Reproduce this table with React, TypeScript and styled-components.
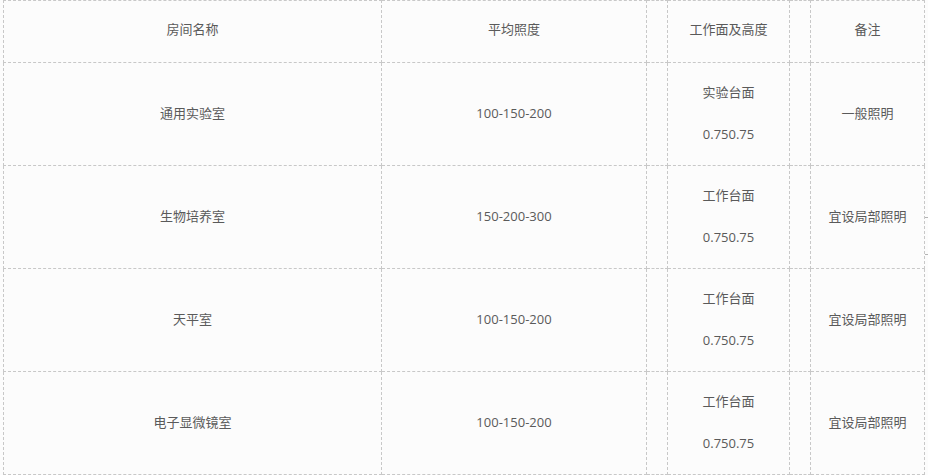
import React from "react";
import styled, { createGlobalStyle } from "styled-components";

const GlobalStyle = createGlobalStyle`
  html, body {
    margin: 0;
    padding: 0;
    background: #fcfcfc;
  }
  body {
    font-family: "Open Sans", "Noto Sans CJK SC", sans-serif;
    font-size: 13px;
    color: #5a5a5a;
  }
`;

const Page = styled.div`
  position: relative;
  padding: 0 0 0 3px;
  width: 925px;
  height: 475px;
  box-sizing: border-box;
`;

const Table = styled.table`
  border-collapse: collapse;
  table-layout: fixed;
  width: 921px;
  background: #fcfcfc;
`;

const Cell = styled.td<{ $head?: boolean }>`
  border: 1px dashed #c8c8c8;
  text-align: center;
  vertical-align: middle;
  padding: 0 0 ${(p) => (p.$head ? 6 : 2)}px 0;
  height: ${(p) => (p.$head ? 55 : 100)}px;
  line-height: 20px;
  color: #5a5a5a;
  font-weight: normal;
`;

const Stack = styled.div`
  display: flex;
  flex-direction: column;
  align-items: center;
  gap: 22px;
  padding-bottom: 1px;
`;

const Line = styled.span`
  display: block;
  line-height: 20px;
`;

const Marker = styled.div`
  position: absolute;
  left: 925px;
  top: 217px;
  width: 3px;
  height: 36px;
  border-top: 1px solid #b5b5b5;
  border-bottom: 1px solid #b5b5b5;
`;

type Row = {
  name: string;
  lux: string;
  surface: string;
  height: string;
  note: string;
};

const rows: Row[] = [
  { name: "通用实验室", lux: "100-150-200", surface: "实验台面", height: "0.750.75", note: "一般照明" },
  { name: "生物培养室", lux: "150-200-300", surface: "工作台面", height: "0.750.75", note: "宜设局部照明" },
  { name: "天平室", lux: "100-150-200", surface: "工作台面", height: "0.750.75", note: "宜设局部照明" },
  { name: "电子显微镜室", lux: "100-150-200", surface: "工作台面", height: "0.750.75", note: "宜设局部照明" },
];

export default function App() {
  return (
    <>
      <GlobalStyle />
      <Page>
        <Table>
          <colgroup>
            <col style={{ width: 378 }} />
            <col style={{ width: 265 }} />
            <col style={{ width: 21 }} />
            <col style={{ width: 122 }} />
            <col style={{ width: 21 }} />
            <col style={{ width: 114 }} />
          </colgroup>
          <tbody>
            <tr>
              <Cell $head>房间名称</Cell>
              <Cell $head>平均照度</Cell>
              <Cell $head />
              <Cell $head>工作面及高度</Cell>
              <Cell $head />
              <Cell $head>备注</Cell>
            </tr>
            {rows.map((r) => (
              <tr key={r.name}>
                <Cell>{r.name}</Cell>
                <Cell>{r.lux}</Cell>
                <Cell />
                <Cell>
                  <Stack>
                    <Line>{r.surface}</Line>
                    <Line>{r.height}</Line>
                  </Stack>
                </Cell>
                <Cell />
                <Cell>{r.note}</Cell>
              </tr>
            ))}
          </tbody>
        </Table>
        <Marker />
      </Page>
    </>
  );
}
